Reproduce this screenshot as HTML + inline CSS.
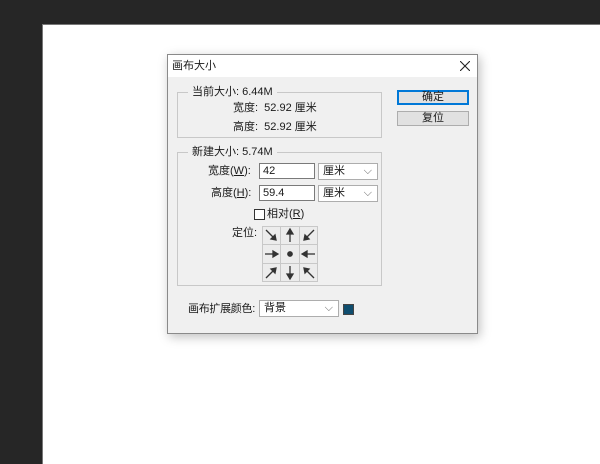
<!DOCTYPE html>
<html><head><meta charset="utf-8"><style>
*{margin:0;padding:0;box-sizing:border-box}
body{width:600px;height:454px;background:#262626;position:relative;overflow:hidden;font-family:"Liberation Sans","Noto Sans CJK SC",sans-serif;font-size:11px;line-height:13px;color:#1a1a1a}
.a{position:absolute;white-space:nowrap}
.canvas{left:42px;top:24px;width:560px;height:440px;background:#fff;border-left:1px solid #777;border-top:1px solid #777}
.dlg{left:167px;top:54px;width:311px;height:280px;background:#f0f0f0;border:1px solid #8a8a8a;box-shadow:2px 3px 10px rgba(0,0,0,.25)}
.tb{left:0;top:0;width:309px;height:22px;background:#fff}
.grp{border:1px solid #c8c8c8}
.lg{background:#f0f0f0;padding:0 4px;line-height:13px}
.inp{background:#fff;border:1px solid #7a7a7a;height:16px;line-height:14px;padding-left:3px}
.sel{background:#fff;border:1px solid #adadad;height:17px;line-height:15px;padding-left:4px}
.btn{background:#e1e1e1;border:1px solid #adadad;text-align:center;line-height:13px;height:15px;width:72px}
</style></head><body>
<div class="a canvas"></div>
<div class="a dlg">
 <div class="a tb"></div>
 <div class="a" style="left:4px;top:5px">画布大小</div>
 <svg class="a" style="left:292px;top:6px" width="10" height="10"><path d="M0 0L10 10M10 0L0 10" stroke="#222" stroke-width="1.1"/></svg>

 <div class="a grp" style="left:9px;top:37px;width:205px;height:46px"></div>
 <div class="a lg" style="left:20px;top:31px">当前大小: 6.44M</div>
 <div class="a" style="left:65px;top:47px">宽度:&nbsp; 52.92 厘米</div>
 <div class="a" style="left:65px;top:66px">高度:&nbsp; 52.92 厘米</div>

 <div class="a grp" style="left:9px;top:97px;width:205px;height:134px"></div>
 <div class="a lg" style="left:20px;top:91px">新建大小: 5.74M</div>
 <div class="a" style="left:40px;top:110px">宽度(<u>W</u>):</div>
 <div class="a inp" style="left:91px;top:108px;width:56px">42</div>
 <div class="a sel" style="left:150px;top:108px;width:60px">厘米<span style="position:absolute;right:5px;color:#666">⌵</span></div>
 <div class="a" style="left:43px;top:132px">高度(<u>H</u>):</div>
 <div class="a inp" style="left:91px;top:130px;width:56px">59.4</div>
 <div class="a sel" style="left:150px;top:130px;width:60px">厘米<span style="position:absolute;right:5px;color:#666">⌵</span></div>
 <div class="a" style="left:86px;top:154px;width:11px;height:11px;border:1px solid #333;background:#fff"></div>
 <div class="a" style="left:99px;top:153px">相对(<u>R</u>)</div>
 <div class="a" style="left:64px;top:172px">定位:</div>
 <div class="a" style="left:94px;top:171px;width:56px;height:56px">
  <svg width="56" height="56" viewBox="0 0 56 56">
   <g fill="#ececec" stroke="#c8c8c8"><rect x=".5" y=".5" width="55" height="55"/><path d="M18.5 0v56M37.5 0v56M0 18.5h56M0 37.5h56"/></g>
   <g stroke="#333" stroke-width="1.3" fill="#333">
    <path d="M4 4l9 9"/><path d="M14 14l-5-1 4-4z"/>
    <path d="M28 16v-11"/><path d="M28 3l-3 5h6z"/>
    <path d="M52 4l-9 9"/><path d="M42 14l1-5 4 4z"/>
    <path d="M3 28h10"/><path d="M16 28l-5-3v6z"/>
    <circle cx="28" cy="28" r="2.2"/>
    <path d="M53 28h-10"/><path d="M40 28l5-3v6z"/>
    <path d="M4 52l9-9"/><path d="M14 42l-5 1 4 4z"/>
    <path d="M28 40v11"/><path d="M28 53l-3-5h6z"/>
    <path d="M52 52l-9-9"/><path d="M42 42l5 1-4 4z"/>
   </g>
  </svg>
 </div>

 <div class="a" style="left:20px;top:248px;letter-spacing:-0.3px">画布扩展颜色:</div>
 <div class="a sel" style="left:91px;top:245px;width:80px">背景<span style="position:absolute;right:5px;color:#666">⌵</span></div>
 <div class="a" style="left:175px;top:249px;width:11px;height:11px;background:#0f4d6e;border:1px solid #444"></div>

 <div class="a btn" style="left:229px;top:35px;border:1px solid #0078d7;box-shadow:inset 0 0 0 1px #0078d7">确定</div>
 <div class="a btn" style="left:229px;top:56px">复位</div>
</div>
</body></html>
